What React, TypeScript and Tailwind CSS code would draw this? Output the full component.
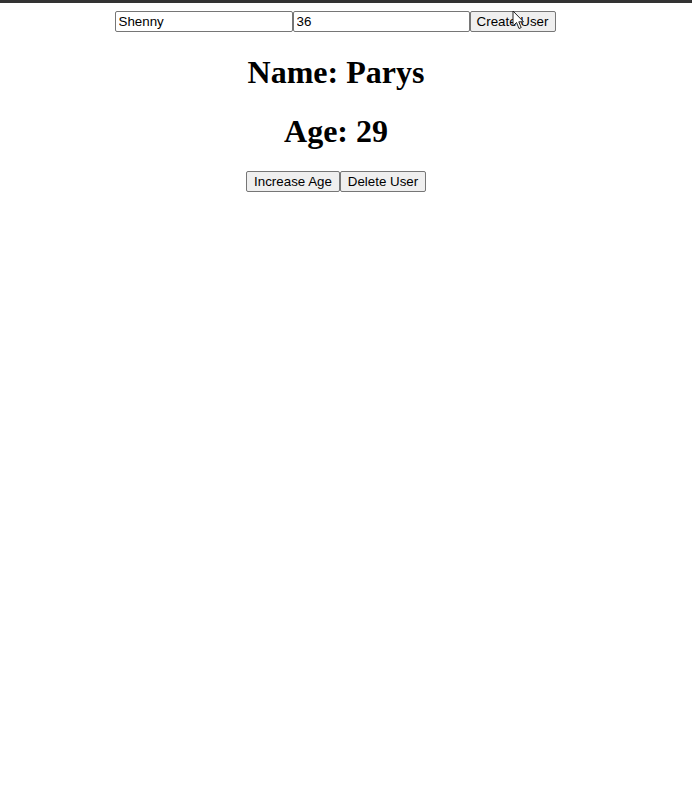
import React from "react";

export default function App() {
  return (
    <div className="min-h-[792px] w-[692px] bg-white relative">
      <div className="h-[3px] bg-[#333333]" />
      <div className="w-[672px] px-2 pt-2 text-center">
        <div className="flex justify-center h-[21px] pr-[2px]">
          <input
            defaultValue="Shenny"
            className="w-[178px] h-[21px] border border-[#767676] rounded-[2px] px-[3px] text-[13.33px] text-black bg-white outline-none font-['Liberation_Sans',Arial,sans-serif]"
          />
          <input
            defaultValue="36"
            className="w-[177px] h-[21px] border border-[#767676] rounded-[2px] px-[3px] text-[13.33px] text-black bg-white outline-none font-['Liberation_Sans',Arial,sans-serif]"
          />
          <button className="w-[86px] h-[21px] border border-[#767676] rounded-[2px] bg-[#efefef] text-[13.33px] text-black leading-none font-['Liberation_Sans',Arial,sans-serif]">
            Create User
          </button>
        </div>
        <h1 className="mt-[22px] mb-[21px] text-[32px] leading-[37px] font-bold text-black font-['Liberation_Serif','Times_New_Roman',serif]">
          Name: Parys
        </h1>
        <h1 className="mt-[22px] mb-[21px] text-[32px] leading-[37px] font-bold text-black font-['Liberation_Serif','Times_New_Roman',serif]">
          Age: 29
        </h1>
        <div className="flex justify-center h-[21px]">
          <button className="w-[94px] h-[21px] border border-[#767676] rounded-[2px] bg-[#efefef] text-[13.33px] text-black leading-none font-['Liberation_Sans',Arial,sans-serif]">
            Increase Age
          </button>
          <button className="w-[86px] h-[21px] border border-[#767676] rounded-[2px] bg-[#efefef] text-[13.33px] text-black leading-none font-['Liberation_Sans',Arial,sans-serif]">
            Delete User
          </button>
        </div>
      </div>
      <svg
        className="absolute left-[512px] top-[10px]"
        width="13"
        height="20"
        viewBox="0 0 13 20"
      >
        <path
          d="M1 1 L1 16 L4.5 12.5 L7 18.5 L9.2 17.6 L6.8 11.8 L11.5 11.8 Z"
          fill="white"
          stroke="#222"
          strokeWidth="1"
          strokeLinejoin="round"
        />
      </svg>
    </div>
  );
}
